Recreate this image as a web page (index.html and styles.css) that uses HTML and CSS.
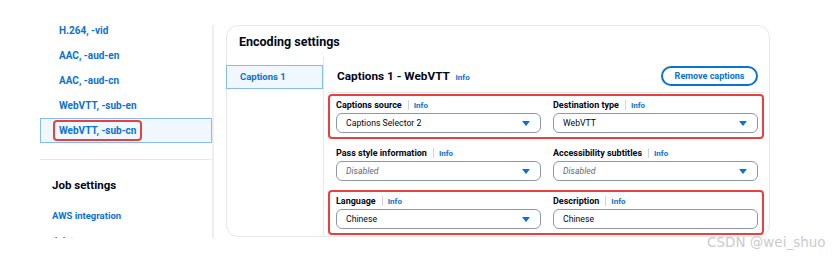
FILE: index.html
```html
<!DOCTYPE html>
<html lang="en">
<head>
    <meta charset="UTF-8">
    <meta name="viewport" content="width=device-width, initial-scale=1.0">
    <title>Encoding settings</title>
    <link rel="stylesheet" href="styles.css">
</head>
<body>

    <div class="page">
        <div class="sidebar">
            <div class="nav-list">
                <div class="nav-item">H.264, -vid</div>
                <div class="nav-item">AAC, -aud-en</div>
                <div class="nav-item">AAC, -aud-cn</div>
                <div class="nav-item">WebVTT, -sub-en</div>
                <div class="nav-item selected"><span class="mark">WebVTT, -sub-cn</span></div>
            </div>
            <div class="nav-divider"></div>
            <h2 class="nav-heading">Job settings</h2>
            <div class="nav-link">AWS integration</div>
            <div class="nav-link">Job tags</div>
        </div>

        <div class="card">
            <div class="card-header">Encoding settings</div>
            <div class="card-body">
                <div class="tabs">
                    <div class="tab active">Captions 1</div>
                </div>

                <div class="pane">
                    <div class="pane-header">
                        <div class="pane-title">Captions 1 - WebVTT <span class="info">Info</span></div>
                        <button class="btn-outline">Remove captions</button>
                    </div>

                    <div class="field-row marked">
                        <div class="field">
                            <div class="label">Captions source <span class="sep"></span><span class="info">Info</span></div>
                            <div class="select">
                                <span>Captions Selector 2</span>
                                <svg class="caret" width="8" height="5" viewBox="0 0 8 5"><path d="M0 0h8L4 5z"/></svg>
                            </div>
                        </div>
                        <div class="field">
                            <div class="label">Destination type <span class="sep"></span><span class="info">Info</span></div>
                            <div class="select">
                                <span>WebVTT</span>
                                <svg class="caret" width="8" height="5" viewBox="0 0 8 5"><path d="M0 0h8L4 5z"/></svg>
                            </div>
                        </div>
                    </div>

                    <div class="field-row">
                        <div class="field">
                            <div class="label">Pass style information <span class="sep"></span><span class="info">Info</span></div>
                            <div class="select">
                                <span class="placeholder">Disabled</span>
                                <svg class="caret" width="8" height="5" viewBox="0 0 8 5"><path d="M0 0h8L4 5z"/></svg>
                            </div>
                        </div>
                        <div class="field">
                            <div class="label">Accessibility subtitles <span class="sep"></span><span class="info">Info</span></div>
                            <div class="select">
                                <span class="placeholder">Disabled</span>
                                <svg class="caret" width="8" height="5" viewBox="0 0 8 5"><path d="M0 0h8L4 5z"/></svg>
                            </div>
                        </div>
                    </div>

                    <div class="field-row marked">
                        <div class="field">
                            <div class="label">Language <span class="sep"></span><span class="info">Info</span></div>
                            <div class="select">
                                <span>Chinese</span>
                                <svg class="caret" width="8" height="5" viewBox="0 0 8 5"><path d="M0 0h8L4 5z"/></svg>
                            </div>
                        </div>
                        <div class="field">
                            <div class="label">Description <span class="sep"></span><span class="info">Info</span></div>
                            <div class="select">
                                <span>Chinese</span>
                            </div>
                        </div>
                    </div>
                </div>
            </div>
        </div>
    </div>

    <div class="watermark">CSDN @wei_shuo</div>

</body>
</html>
```

FILE: styles.css
```css
body {
    font-family: Roboto, Arial, sans-serif;
    margin: 0;
    padding: 0;
    width: 839px;
    height: 258px;
    overflow: hidden;
    background-color: #fff;
    color: #000716;
    position: relative;
}
.page {
    display: flex;
    padding-top: 25px;
    margin-left: 40px;
}
.sidebar {
    width: 172px;
    height: 213px;
    border-right: 2px solid #eceef0;
    overflow: hidden;
    flex: none;
}
.nav-list {
    margin-top: -7px;
}
.nav-item {
    height: 25px;
    box-sizing: border-box;
    display: flex;
    align-items: center;
    padding-left: 19px;
    font-size: 10px;
    font-weight: bold;
    color: #0972d3;
}
.nav-item.selected {
    background-color: #f0f7fe;
    border: 1px solid #86bdf0;
    padding-left: 18px;
}
.mark {
    border: 2px solid #e8403e;
    border-radius: 4px;
    padding: 2px 4px;
    margin-left: -6px;
    line-height: 13px;
}
.nav-divider {
    height: 1px;
    background-color: #e6e8ea;
    margin-top: 16px;
}
.nav-heading {
    margin: 15px 0 0 12px;
    font-size: 11.5px;
    line-height: 20px;
    font-weight: bold;
}
.nav-link {
    margin: 8px 0 0 12px;
    height: 25px;
    line-height: 25px;
    font-size: 9.5px;
    font-weight: bold;
    color: #0972d3;
}
.nav-link + .nav-link {
    margin-top: 0;
}
.card {
    margin-left: 12px;
    width: 544px;
    height: 212px;
    box-sizing: border-box;
    border: 1px solid #e6e8ea;
    border-radius: 12px;
    flex: none;
}
.card-header {
    height: 31px;
    line-height: 31px;
    padding-left: 12px;
    font-size: 12.5px;
    font-weight: bold;
}
.card-body {
    display: flex;
    height: 179px;
}
.tabs {
    width: 96px;
    border-right: 1px solid #e6e8ea;
    padding-top: 8px;
    flex: none;
}
.tab {
    margin-left: -1px;
    height: 24px;
    box-sizing: border-box;
    line-height: 22px;
    padding-left: 13px;
    font-size: 9.5px;
    font-weight: bold;
    color: #0972d3;
}
.tab.active {
    background-color: #f0f7fe;
    border: 1px solid #86bdf0;
}
.pane {
    flex: 1;
    padding: 9px 5px 0 4px;
}
.pane-header {
    display: flex;
    justify-content: space-between;
    align-items: center;
    height: 20px;
    padding: 0 6px 6px 9px;
    border-bottom: 1px solid #e6e8ea;
    margin-bottom: 1px;
}
.pane-title {
    font-size: 11.8px;
    font-weight: bold;
}
.btn-outline {
    height: 20px;
    width: 97px;
    border: 2px solid #0972d3;
    border-radius: 12px;
    background-color: #fff;
    color: #0972d3;
    font-family: inherit;
    font-size: 9px;
    font-weight: bold;
    padding: 0;
    cursor: pointer;
}
.info {
    font-size: 8px;
    font-weight: bold;
    color: #0972d3;
    margin-left: 3px;
}
.field-row {
    display: grid;
    grid-template-columns: 205px 205px;
    column-gap: 12px;
    border: 2px solid transparent;
    border-radius: 4px;
    padding: 2px 4px 4px 6px;
    margin-bottom: 3px;
}
.field-row.marked {
    border-color: #e8403e;
}
.field {
    display: flex;
    flex-direction: column;
    gap: 1px;
}
.label {
    display: flex;
    align-items: center;
    height: 14px;
    font-size: 9px;
    font-weight: bold;
}
.label .info {
    margin-left: 0;
}
.sep {
    width: 1px;
    height: 10px;
    background-color: #d1d5db;
    margin: 0 5px 0 6px;
}
.select {
    height: 20px;
    box-sizing: border-box;
    border: 1px solid #8d99a8;
    border-radius: 6px;
    display: flex;
    align-items: center;
    justify-content: space-between;
    padding: 0 10px 0 9px;
    font-size: 8.7px;
}
.placeholder {
    font-style: italic;
    color: #5f6b7a;
}
.caret {
    fill: #0972d3;
}
.watermark {
    position: absolute;
    left: 707px;
    top: 234px;
    font-family: "DejaVu Sans", sans-serif;
    font-size: 13.5px;
    color: #cbcbcb;
}
```
